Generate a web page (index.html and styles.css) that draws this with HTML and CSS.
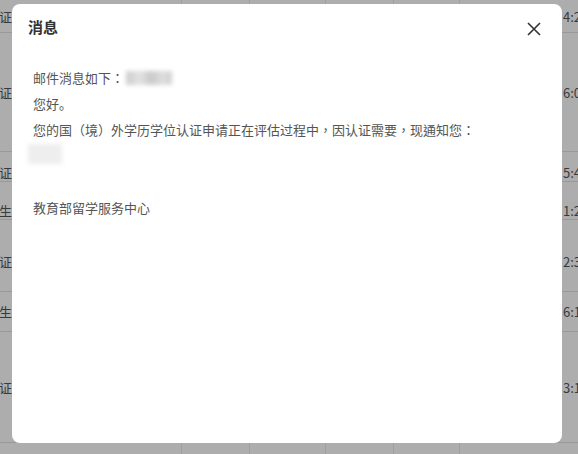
FILE: index.html
```html
<!DOCTYPE html>
<html lang="zh-CN">

<head>
  <meta charset="UTF-8">
  <meta name="viewport" content="width=device-width, initial-scale=1.0">
  <title>消息</title>
  <link rel="stylesheet" href="styles.css">
</head>

<body>
  <!-- 背景表格（被遮罩） -->
  <div class="table">
    <div class="row row-a">
      <div class="cell first"><span>认证</span></div>
      <div class="cell"></div><div class="cell"></div><div class="cell"></div><div class="cell"></div><div class="cell"></div>
      <div class="cell last"><span>4:21</span></div>
    </div>
    <div class="row row-b">
      <div class="cell first"><span>认证</span></div>
      <div class="cell"></div><div class="cell"></div><div class="cell"></div><div class="cell"></div><div class="cell"></div>
      <div class="cell last"><span>6:01</span></div>
    </div>
    <div class="row row-c">
      <div class="cell first"><span>认证</span></div>
      <div class="cell"></div><div class="cell"></div><div class="cell"></div><div class="cell"></div><div class="cell"></div>
      <div class="cell last"><span>5:41</span></div>
    </div>
    <div class="row row-d">
      <div class="cell first"><span>学生</span></div>
      <div class="cell"></div><div class="cell"></div><div class="cell"></div><div class="cell"></div><div class="cell"></div>
      <div class="cell last"><span>1:21</span></div>
    </div>
    <div class="row row-e">
      <div class="cell first"><span>认证</span></div>
      <div class="cell"></div><div class="cell"></div><div class="cell"></div><div class="cell"></div><div class="cell"></div>
      <div class="cell last"><span>2:31</span></div>
    </div>
    <div class="row row-f">
      <div class="cell first"><span>学生</span></div>
      <div class="cell"></div><div class="cell"></div><div class="cell"></div><div class="cell"></div><div class="cell"></div>
      <div class="cell last"><span>6:11</span></div>
    </div>
    <div class="row row-g">
      <div class="cell first"><span>认证</span></div>
      <div class="cell"></div><div class="cell"></div><div class="cell"></div><div class="cell"></div><div class="cell"></div>
      <div class="cell last"><span>3:11</span></div>
    </div>
    <div class="row row-h">
      <div class="cell first"></div>
      <div class="cell"></div><div class="cell"></div><div class="cell"></div><div class="cell"></div><div class="cell"></div>
      <div class="cell last"></div>
    </div>
  </div>

  <!-- 消息弹窗 -->
  <div class="modal">
    <div class="modal-header">
      <span class="modal-title">消息</span>
      <button type="button" class="close-btn">
        <svg width="14" height="14" viewBox="0 0 14 14">
          <path d="M1 1 L13 13 M13 1 L1 13" stroke="#333" stroke-width="1.6" fill="none" />
        </svg>
      </button>
    </div>
    <div class="modal-body" lang="zh-TW">
      <p>邮件消息如下：<span class="blur blur-email"></span></p>
      <p lang="zh-CN">您好。</p>
      <p>您的国（境）外学历学位认证申请正在评估过程中，因认证需要，现通知您：</p>
      <p class="blur-line"><span class="blur blur-block"></span></p>
      <p class="empty"></p>
      <p>教育部留学服务中心</p>
    </div>
  </div>
</body>

</html>
```

FILE: styles.css
```css
body {
  margin: 0;
  padding: 0;
  width: 578px;
  height: 454px;
  overflow: hidden;
  background-color: #adadad;
  font-family: "Microsoft YaHei", "Noto Sans CJK SC", sans-serif;
  position: relative;
}

/* 背景表格 */
.table {
  display: flex;
  flex-direction: column;
}

.row {
  display: grid;
  grid-template-columns: 22px 160px 68px 76px 68px 66px 1fr;
  border-bottom: 1px solid #999;
}

.row-a { height: 32px; }
.row-b { height: 118px; }
.row-c { height: 29px; }
.row-d { height: 37px; }
.row-e { height: 71px; }
.row-f { height: 39px; }
.row-g { height: 110px; }
.row-h { height: 20px; border-bottom: none; }

.cell {
  border-right: 1px solid #9f9f9f;
  display: flex;
  align-items: center;
  overflow: hidden;
  font-size: 13px;
  color: #3a3a3a;
  white-space: nowrap;
}

.row-c .cell { padding-top: 11px; }
.row-d .cell { padding-top: 20px; }
.row-e .cell { padding-top: 12px; }

.cell.first {
  justify-content: flex-end;
  padding-right: 10px;
  border-right: none;
}

.cell.last {
  border-right: none;
  padding-left: 103px;
}

/* 弹窗 */
.modal {
  position: absolute;
  left: 12px;
  top: 4px;
  width: 550px;
  height: 439px;
  background-color: #fff;
  border-radius: 8px;
}

.modal-header {
  display: flex;
  align-items: center;
  justify-content: space-between;
  padding: 8px 21px 0 16px;
  height: 28px;
}

.modal-title {
  font-size: 15px;
  font-weight: bold;
  color: #333;
}

.close-btn {
  background: none;
  border: none;
  padding: 0;
  margin-top: 6px;
  width: 14px;
  height: 14px;
  cursor: pointer;
  display: flex;
}

.modal-body {
  padding: 25px 21px 0 21px;
  font-family: "Noto Sans CJK TC", "Noto Sans CJK SC", sans-serif;
  font-size: 13px;
  color: #555;
}

.modal-body p {
  margin: 0;
  line-height: 26px;
  height: 26px;
}

.modal-body p:lang(zh-CN) {
  font-family: "Noto Sans CJK SC", sans-serif;
}

.blur {
  display: inline-block;
  vertical-align: middle;
  filter: blur(2px);
}

.blur-email {
  width: 46px;
  height: 14px;
  margin-left: 2px;
  background: linear-gradient(90deg, #ccc 0, #e2e2e2 30%, #c9c9c9 55%, #dedede 80%, #d0d0d0 100%);
  margin-top: -3px;
}

.blur-block {
  width: 34px;
  height: 20px;
  margin-left: -5px;
  margin-top: -6px;
  background-color: #eeeeee;
}
```
